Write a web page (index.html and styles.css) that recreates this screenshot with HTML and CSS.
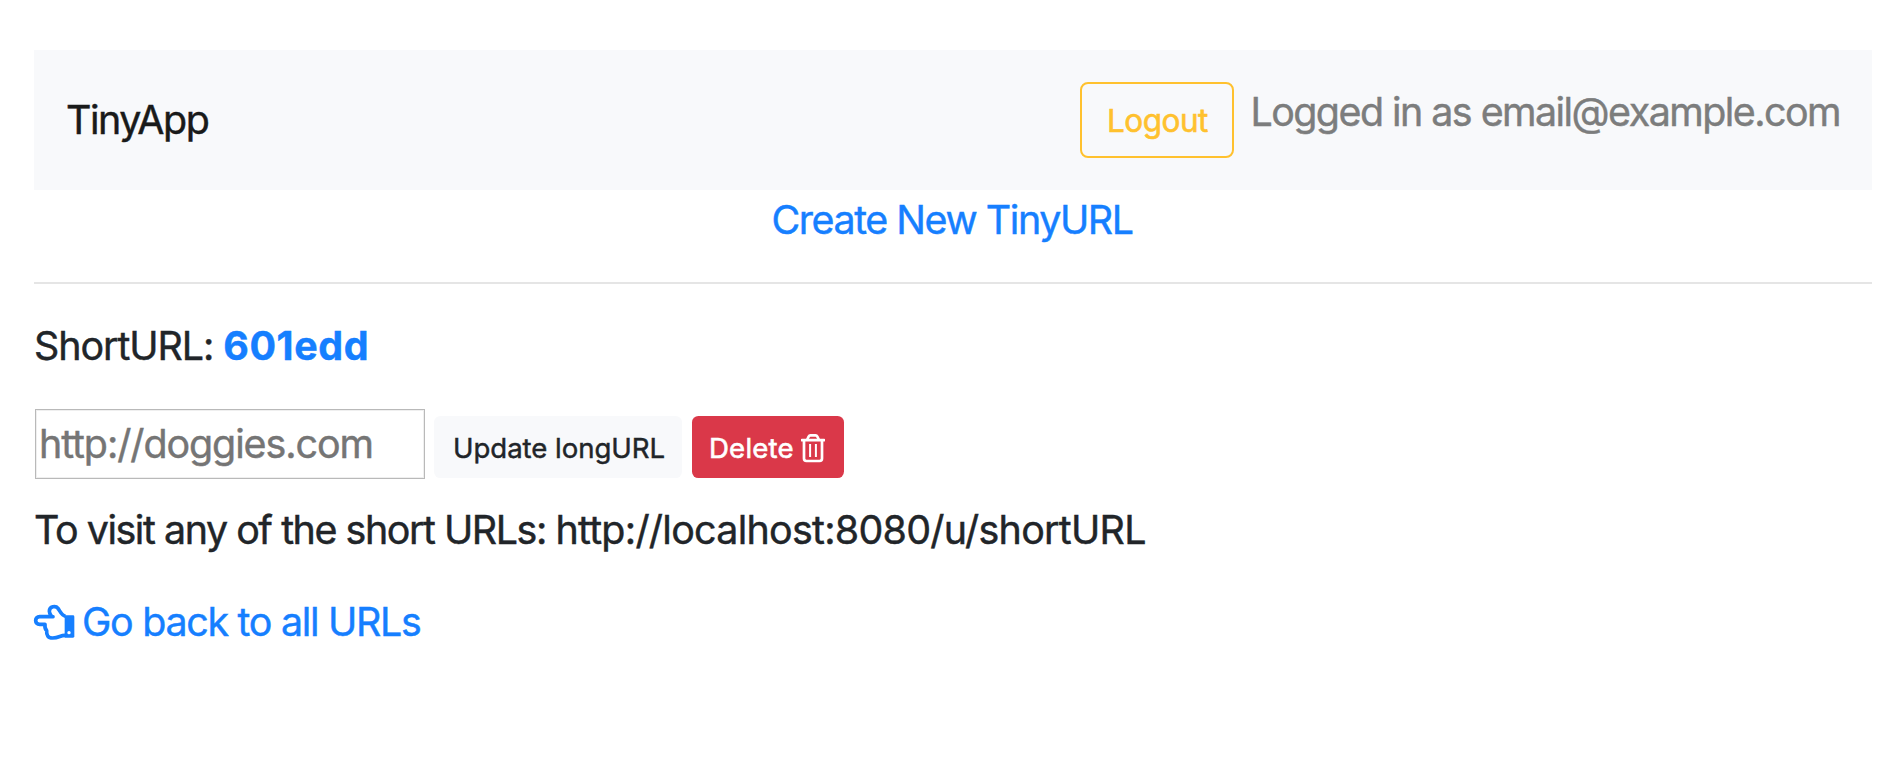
FILE: index.html
```
<!DOCTYPE html>
<html lang="en">
<head>
<meta charset="utf-8">
<title>TinyApp</title>
<link rel="stylesheet" href="styles.css">
</head>
<body>
<header>
  <nav class="navbar">
    <a class="brand">TinyApp</a>
    <div class="account">
      <button class="btn-logout" type="button"><span>Logout</span></button>
      <span class="user">Logged in as email@example.com</span>
    </div>
  </nav>
  <a class="create">Create New TinyURL</a>
</header>
<hr>
<main>
  <p class="short">ShortURL: <a class="code">601edd</a></p>
  <form class="edit">
    <input class="long-url" type="text" placeholder="http://doggies.com">
    <button class="btn btn-light" type="button">Update longURL</button>
    <button class="btn btn-danger" type="button"><span>Delete</span>
      <svg class="trash" viewBox="0 0 24 30" fill="none" stroke="#fff">
        <path d="M1 7.2H23" stroke-width="2.8" stroke-linecap="round"/>
        <path d="M6 7L7.6 3.6Q8.2 2.4 9.4 2.4H14.6Q15.8 2.4 16.4 3.6L18 7" stroke-width="2.6"/>
        <path d="M3 7.5V25.6Q3 28 5.4 28H18.6Q21 28 21 25.6V7.5" stroke-width="2.7"/>
        <path d="M9.1 11V24M14.9 11V24" stroke-width="2"/>
      </svg>
    </button>
  </form>
  <p class="visit">To visit any of the short URLs: <span class="address">http://localhost:8080/u/shortURL</span></p>
  <a class="back">
    <svg class="hand" viewBox="0 0 120 105" fill="none" stroke="#167fff" stroke-width="11" stroke-linejoin="round">
      <path d="M94 34C82 30 77 17 72 10C65 1 46 4 46 19C46 24 49 29 52 33.5L57 35H17C1 35 1 58 17 58H33C32 67 34 73 38 77C37 91 42 99 56 99C75 99 80 90 94 91"/>
      <path d="M92 31H117Q121 31 121 35V94Q121 98 117 98H92Z" fill="#167fff" stroke="none"/>
      <circle cx="105" cy="83" r="5" fill="#fff" stroke="none"/>
    </svg>
    <span>Go back to all URLs</span>
  </a>
</main>
</body>
</html>
```
FILE: styles.css
```
* { box-sizing: border-box; }
body {
  margin: 0;
  padding: 50px 28px 0 34px;
  background: #fff;
  color: #212529;
  font-family: Inter, "Liberation Sans", sans-serif;
  font-size: 39.4px;
  line-height: 60px;
  white-space: nowrap;
  -webkit-text-stroke: 0.45px currentColor;
}
header { display: flex; flex-direction: column; }
.navbar {
  display: flex;
  align-items: center;
  justify-content: space-between;
  height: 140px;
  padding: 0 32px;
  background: #f8f9fb;
}
.brand { color: #191a1a; letter-spacing: -1.45px; }
.account { display: flex; align-items: flex-start; gap: 16px; }
.btn-logout {
  width: 154px;
  height: 76px;
  padding: 1px 0 0;
  border: 2px solid #ffc12e;
  border-radius: 8px;
  background: transparent;
  color: #ffc12e;
  font: 31.5px/71px Inter, sans-serif;
  letter-spacing: -0.5px;
}
.user { color: #7c7d7d; letter-spacing: -1.54px; }
.create { align-self: center; padding-right: 2px; color: #167fff; letter-spacing: -1.44px; }
hr { height: 2px; margin: 32px 0; border: 0; background: #e5e5e5; }
p { margin: 0; }
.short { display: flex; gap: 10px; letter-spacing: -1.06px; }
.code { color: #167fff; font-weight: 700; letter-spacing: 0.6px; }
.edit { display: flex; align-items: flex-start; height: 92px; margin-top: 32px; padding: 1px 0 0 1px; }
.long-url {
  width: 390px;
  height: 70px;
  padding: 0 3px;
  border: 1px solid #b9b9b9;
  box-shadow: inset 0 0 0 1px #efefef;
  border-radius: 0;
  background: #fff;
  font: 39.4px Inter, sans-serif;
  letter-spacing: -1.08px;
  -webkit-text-stroke: 0.45px #757575;
}
.long-url::placeholder { color: #757575; opacity: 1; }
.btn {
  display: flex;
  align-items: center;
  height: 62px;
  margin-top: 7px;
  border: 0;
  border-radius: 6.4px;
  font: 27.6px/60px Inter, sans-serif;
}
.btn-light { width: 248px; margin-left: 9px; padding: 1px 0 0 19px; background: #f8f9fb; color: #212529; letter-spacing: -0.05px; }
.btn-danger { width: 152px; margin-left: 10px; padding: 1px 0 0 17px; gap: 7px; background: #da3849; color: #fff; letter-spacing: 0.2px; }
.btn-logout, .btn-danger { -webkit-text-stroke: 0.6px currentColor; }
.trash { flex: none; width: 24px; height: 30px; }
.visit { margin-bottom: 32px; letter-spacing: -1.45px; }
.address { letter-spacing: -0.72px; }
.back { display: flex; align-items: center; gap: 8px; color: #167fff; letter-spacing: -1.29px; }
.hand { width: 40px; height: 35px; overflow: visible; }
```
